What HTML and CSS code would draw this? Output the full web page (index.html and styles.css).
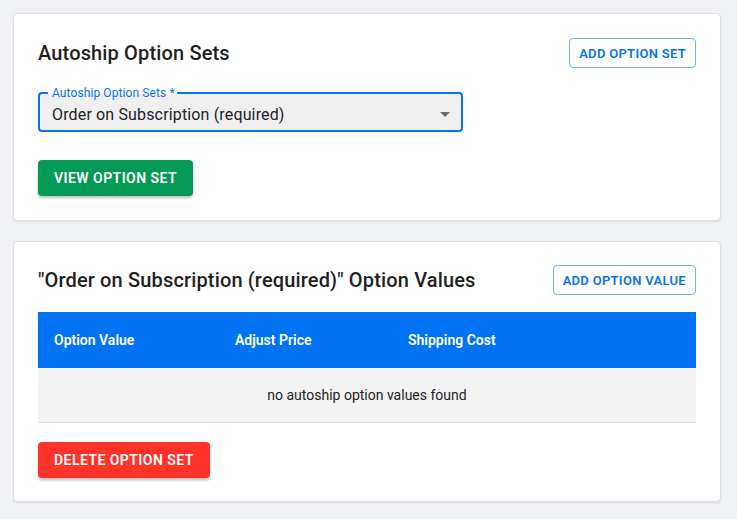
FILE: index.html
```html
<!DOCTYPE html>
<html lang="en">
<head>
<meta charset="utf-8">
<title>Autoship Option Sets</title>
<link rel="stylesheet" href="styles.css">
</head>
<body>
<main class="page">
  <section class="card">
    <div class="card-head">
      <h2 class="card-title">Autoship Option Sets</h2>
      <button class="btn btn-outline">Add Option Set</button>
    </div>
    <div class="field">
      <fieldset class="field-outline"><legend class="field-legend">Autoship Option Sets *</legend></fieldset>
      <span class="field-label">Autoship Option Sets *</span>
      <span class="field-value">Order on Subscription (required)</span>
      <svg class="field-arrow" width="10" height="5" viewBox="0 0 10 5"><path d="M0 0 L10 0 L5 5 Z" fill="#6b6b6b"/></svg>
    </div>
    <div class="card-actions">
      <button class="btn btn-green">View Option Set</button>
    </div>
  </section>

  <section class="card">
    <div class="card-head">
      <h2 class="card-title">"Order on Subscription (required)" Option Values</h2>
      <button class="btn btn-outline">Add Option Value</button>
    </div>
    <table class="values-table">
      <thead>
        <tr>
          <th class="col-value">Option Value</th>
          <th class="col-price">Adjust Price</th>
          <th class="col-ship">Shipping Cost</th>
        </tr>
      </thead>
      <tbody>
        <tr><td class="empty" colspan="3">no autoship option values found</td></tr>
      </tbody>
    </table>
    <div class="card-actions card-actions-tight">
      <button class="btn btn-red">Delete Option Set</button>
    </div>
  </section>
</main>
</body>
</html>
```

FILE: styles.css
```css
* { box-sizing: border-box; }
html, body { margin: 0; padding: 0; }
body {
  background: #f0f1f5;
  font-family: Roboto, "Noto Sans", Arial, sans-serif;
  color: #222;
}
.page {
  padding: 13px 16px 16px 13px;
  display: flex;
  flex-direction: column;
  gap: 20px;
}
.card {
  background: #fff;
  border: 1px solid #dcdde1;
  border-radius: 4px;
  box-shadow: 0 1px 2px rgba(0,0,0,0.08);
  padding: 24px 24px 24px 24px;
}
.card + .card { padding-top: 23px; padding-bottom: 23px; }
.card-head {
  display: flex;
  align-items: center;
  justify-content: space-between;
  height: 30px;
}
.card-title {
  margin: 0;
  font-size: 20px;
  font-weight: 500;
  color: #1f1f1f;
  letter-spacing: 0.15px;
}
.btn {
  font-family: Roboto, "Noto Sans", Arial, sans-serif;
  text-transform: uppercase;
  font-weight: 600;
  font-size: 13px;
  letter-spacing: 0.45px;
  border-radius: 4px;
  cursor: pointer;
}
.btn-outline {
  background: #fff;
  color: #0a72ec;
  border: 1px solid #6fb0f2;
  height: 30px;
  padding: 0 9px;
  letter-spacing: 0.3px;
}
.btn-green, .btn-red {
  color: #fff;
  border: none;
  height: 36px;
  padding: 0 16px;
  font-size: 14px;
  box-shadow: 0 2px 3px rgba(0,0,0,0.25);
}
.btn-green { background: #039a55; }
.btn-red { background: #ff3329; }

.field {
  position: relative;
  margin-top: 26px;
  width: 425px;
  height: 38px;
  background: #efefef;
  border-radius: 4px;
  display: flex;
  align-items: center;
  padding: 0 14px;
}
.field-outline {
  position: absolute;
  inset: -6px 0 0 0;
  margin: 0;
  padding: 0 8px;
  border: 2px solid #0a72ec;
  border-radius: 4px;
  pointer-events: none;
}
.field-legend {
  font-size: 12px;
  padding: 0 4px;
  visibility: hidden;
  line-height: 10px;
  height: 10px;
}
.field-label {
  position: absolute;
  left: 14px;
  top: -8px;
  font-size: 12px;
  line-height: 14px;
  color: #0a72ec;
  letter-spacing: 0.1px;
}
.field-value {
  font-size: 16px;
  color: #222;
  margin-top: 2px;
  letter-spacing: 0.15px;
}
.field-arrow {
  position: absolute;
  right: 13px;
  top: 18px;
}
.card-actions {
  margin-top: 28px;
  display: flex;
}
.card-actions-tight { margin-top: 19px; }

.values-table {
  margin-top: 17px;
  width: 100%;
  border-collapse: collapse;
  font-size: 14px;
}
.values-table th {
  background: #0073f2;
  color: #fff;
  font-weight: 600;
  text-align: left;
  height: 56px;
  padding: 0 16px;
}
.col-value { width: 181px; }
.col-price { width: 173px; }
.values-table td.empty {
  background: #f2f2f2;
  text-align: center;
  height: 54px;
  border-bottom: 1px solid #dcdcdc;
  color: #222;
}
```
